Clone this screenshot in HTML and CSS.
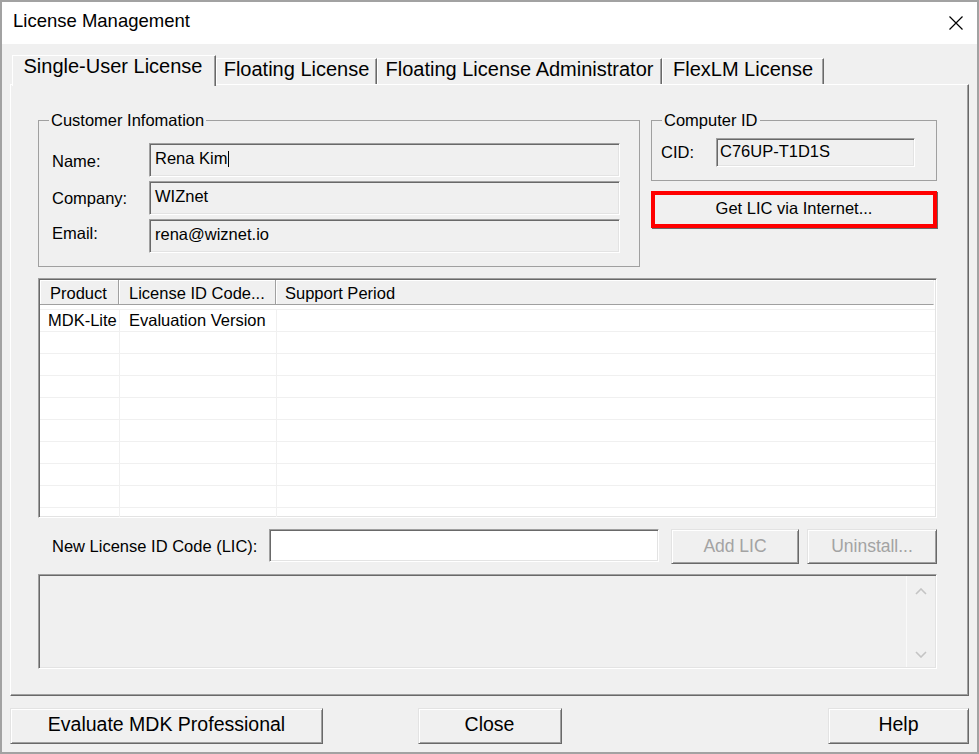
FILE: index.html
```html
<!DOCTYPE html>
<html lang="en">
<head>
<meta charset="utf-8">
<title>License Management</title>
<link rel="stylesheet" href="styles.css">
</head>
<body>
<div class="window">
  <div class="titlebar">
    <span class="title">License Management</span>
    <svg class="close-x" width="14" height="14" viewBox="0 0 14 14" aria-hidden="true">
      <path d="M0.5 0.5 L13.5 13.5 M13.5 0.5 L0.5 13.5" stroke="#000" stroke-width="1.2" fill="none"/>
    </svg>
  </div>
  <div class="client">
    <div class="tabs">
      <div class="tab active tab-single">Single-User License</div>
      <div class="tab tab-floating">Floating License</div>
      <div class="tab tab-admin">Floating License Administrator</div>
      <div class="tab tab-flex">FlexLM License</div>
    </div>
    <div class="panel">
      <div class="top-row">
        <fieldset class="group customer">
          <legend class="legend-customer">Customer Infomation</legend>
          <div class="form-grid">
            <span class="lbl lbl-name">Name:</span>
            <div class="field">Rena Kim<span class="caret"></span></div>
            <span class="lbl">Company:</span>
            <div class="field">WIZnet</div>
            <span class="lbl lbl-email">Email:</span>
            <div class="field">rena@wiznet.io</div>
          </div>
        </fieldset>
        <div class="right-col">
          <fieldset class="group computer">
            <legend class="legend-computer">Computer ID</legend>
            <div class="cid-row">
              <span class="lbl cid-lbl">CID:</span>
              <div class="field cid-field">C76UP-T1D1S</div>
            </div>
          </fieldset>
          <div class="btn getlic">Get LIC via Internet...</div>
        </div>
      </div>

      <div class="listview">
        <div class="lv-header">
          <div class="hcell h1">Product</div>
          <div class="hcell h2">License ID Code...</div>
          <div class="hcell h3">Support Period</div>
        </div>
        <div class="lv-body">
          <div class="row"><div class="c c1">MDK-Lite</div><div class="c c2">Evaluation Version</div><div class="c c3"></div></div>
          <div class="row"><div class="c c1"></div><div class="c c2"></div><div class="c c3"></div></div>
          <div class="row"><div class="c c1"></div><div class="c c2"></div><div class="c c3"></div></div>
          <div class="row"><div class="c c1"></div><div class="c c2"></div><div class="c c3"></div></div>
          <div class="row"><div class="c c1"></div><div class="c c2"></div><div class="c c3"></div></div>
          <div class="row"><div class="c c1"></div><div class="c c2"></div><div class="c c3"></div></div>
          <div class="row"><div class="c c1"></div><div class="c c2"></div><div class="c c3"></div></div>
          <div class="row"><div class="c c1"></div><div class="c c2"></div><div class="c c3"></div></div>
          <div class="row"><div class="c c1"></div><div class="c c2"></div><div class="c c3"></div></div>
          <div class="row"><div class="c c1"></div><div class="c c2"></div><div class="c c3"></div></div>
        </div>
      </div>

      <div class="lic-row">
        <span class="lbl lic-lbl">New License ID Code (LIC):</span>
        <div class="lic-input"></div>
        <div class="btn disabled add-btn">Add LIC</div>
        <div class="btn disabled uninstall-btn">Uninstall...</div>
      </div>

      <div class="textarea">
        <div class="ta-content"></div>
        <div class="scrollbar">
          <svg width="12" height="7" viewBox="0 0 12 7" aria-hidden="true"><polyline points="1,6 6,1 11,6" fill="none" stroke="#c4c4c4" stroke-width="1.6"/></svg>
          <svg width="12" height="7" viewBox="0 0 12 7" aria-hidden="true"><polyline points="1,1 6,6 11,1" fill="none" stroke="#c4c4c4" stroke-width="1.6"/></svg>
        </div>
      </div>
    </div>

    <div class="footer">
      <div class="btn big eval-btn">Evaluate MDK Professional</div>
      <div class="btn big close-btn">Close</div>
      <div class="btn big help-btn">Help</div>
    </div>
  </div>
</div>
</body>
</html>
```

FILE: styles.css
```css
html, body {
  margin: 0;
  padding: 0;
  background: #f0f0f0;
}

.window {
  width: 979px;
  height: 754px;
  box-sizing: border-box;
  border: 2px solid #a2a2a2;
  display: flex;
  flex-direction: column;
  font-family: "Liberation Sans", Arial, sans-serif;
  color: #000;
  overflow: hidden;
}

.titlebar {
  height: 42px;
  flex: none;
  background: #fff;
  display: flex;
  justify-content: space-between;
  align-items: flex-start;
  padding: 8px 14px 0 11px;
  box-sizing: border-box;
}

.title {
  font-size: 18.5px;
  line-height: 22px;
}

.close-x {
  margin-top: 6px;
}

.client {
  flex: 1;
  background: #f0f0f0;
  padding: 11px 8px 0 8px;
  display: flex;
  flex-direction: column;
}

/* Tabs */
.tabs {
  height: 29px;
  display: flex;
  align-items: flex-start;
  margin-left: 2px;
  position: relative;
  z-index: 1;
}

.tab {
  box-sizing: border-box;
  height: 26px;
  margin-top: 3px;
  background: #f0f0f0;
  border-top: 1px solid #fff;
  border-left: 1px solid #fff;
  border-right: 1px solid #696969;
  box-shadow: inset -1px 0 0 #a0a0a0;
  font-size: 20px;
  line-height: 21px;
  text-align: center;
  white-space: nowrap;
}

.tab.active {
  height: 31px;
  margin-top: 0;
  line-height: 21px;
  padding-right: 2px;
}

.tab-single { width: 204px; }
.tab-floating { width: 161px; }
.tab-admin { width: 285px; }
.tab-flex { width: 162px; }

/* Panel */
.panel {
  box-sizing: border-box;
  height: 612px;
  flex: none;
  border-top: 1px solid #fff;
  border-left: 1px solid #fff;
  border-right: 1px solid #696969;
  border-bottom: 1px solid #696969;
  box-shadow: inset -1px -1px 0 #a0a0a0;
  padding: 26px 31px 0 27px;
  display: flex;
  flex-direction: column;
}

.top-row {
  display: flex;
  gap: 11px;
  height: 156px;
}

.group {
  margin: 0;
  border: 1px solid #a0a0a0;
  min-width: 0;
  box-sizing: border-box;
}

.group legend {
  font-size: 16.5px;
  line-height: 18px;
  padding: 0 2px;
}

.customer {
  width: 602px;
  flex: none;
  padding: 14px 19px 13px 13px;
}

.legend-customer {
  margin-left: -3px;
}

.form-grid {
  display: grid;
  grid-template-columns: 97px 1fr;
  grid-auto-rows: 34px;
  row-gap: 4px;
}

.lbl {
  font-size: 16.5px;
  align-self: center;
  white-space: nowrap;
}

.lbl-name {
  padding-top: 2px;
}

.lbl-email {
  padding-bottom: 6px;
}

.field {
  box-sizing: border-box;
  background: #f0f0f0;
  border: 1px solid;
  border-color: #a0a0a0 #fff #fff #a0a0a0;
  box-shadow: inset 1px 1px 0 #696969, inset -1px -1px 0 #e3e3e3;
  font-size: 16.5px;
  display: flex;
  align-items: center;
  padding: 0 0 3px 5px;
  white-space: nowrap;
}

.caret {
  display: inline-block;
  width: 1px;
  height: 16px;
  background: #000;
  margin-left: 1px;
}

.right-col {
  flex: 1;
  display: flex;
  flex-direction: column;
}

.computer {
  height: 70px;
  padding: 9px 21px 13px 9px;
}

.legend-computer {
  margin-left: 1px;
}

.cid-row {
  display: flex;
  height: 29px;
}

.cid-lbl {
  width: 55px;
  flex: none;
}

.cid-field {
  flex: 1;
  padding-left: 3px;
}

/* Buttons */
.btn {
  box-sizing: border-box;
  background: #f0f0f0;
  border: 1px solid;
  border-color: #e3e3e3 #696969 #696969 #e3e3e3;
  box-shadow: inset 1px 1px 0 #fff, inset -1px -1px 0 #a0a0a0;
  display: flex;
  align-items: center;
  justify-content: center;
  white-space: nowrap;
  font-size: 16.5px;
}

.getlic {
  margin-top: 10px;
  height: 37px;
  border: 4px solid #ff0000;
  box-shadow: 1px 1px 0 #696969;
  padding-bottom: 3px;
}

.btn.disabled {
  color: #a3a3a3;
  font-size: 17.5px;
}

.btn.big {
  font-size: 19.5px;
  height: 36px;
  padding-bottom: 4px;
}

/* List view */
.listview {
  margin-top: 11px;
  height: 240px;
  flex: none;
  box-sizing: border-box;
  background: #fff;
  border: 1px solid;
  border-color: #a0a0a0 #fff #fff #a0a0a0;
  box-shadow: inset 1px 1px 0 #696969, inset -1px -1px 0 #e3e3e3;
  padding: 1px;
  overflow: hidden;
  font-size: 16.5px;
}

.lv-header {
  display: grid;
  grid-template-columns: 79px 157px 1fr;
  height: 24px;
  margin-right: 1px;
}

.hcell {
  box-sizing: border-box;
  background: #f0f0f0;
  border-right: 1px solid #a0a0a0;
  border-bottom: 1px solid #a0a0a0;
  box-shadow: inset 1px 1px 0 #fff;
  padding: 2px 0 0 10px;
  line-height: 22px;
  white-space: nowrap;
}

.hcell.h3 {
  padding-left: 9px;
  border-right-color: #f0f0f0;
}

.lv-body {
  padding-top: 5px;
}

.row {
  display: grid;
  grid-template-columns: 80px 157px 1fr;
  height: 22px;
  box-sizing: border-box;
  border-top: 1px solid #f0f0f0;
}

.c {
  border-right: 1px solid #f0f0f0;
  line-height: 21px;
  white-space: nowrap;
  padding-left: 9px;
}

.c1 {
  padding-left: 8px;
}

.c3 {
  border-right: none;
}

/* LIC row */
.lic-row {
  margin-top: 11px;
  height: 35px;
  flex: none;
  display: flex;
  align-items: flex-start;
}

.lic-lbl {
  flex: 1;
  padding-left: 14px;
  align-self: center;
}

.lic-input {
  width: 390px;
  height: 33px;
  box-sizing: border-box;
  background: #fff;
  border: 1px solid;
  border-color: #a0a0a0 #fff #fff #a0a0a0;
  box-shadow: inset 1px 1px 0 #696969, inset -1px -1px 0 #e3e3e3;
}

.add-btn {
  width: 128px;
  height: 35px;
  margin-left: 12px;
}

.uninstall-btn {
  width: 130px;
  height: 35px;
  margin-left: 8px;
}

/* Text area */
.textarea {
  margin-top: 10px;
  height: 95px;
  flex: none;
  box-sizing: border-box;
  background: #f0f0f0;
  border: 1px solid;
  border-color: #a0a0a0 #fff #fff #a0a0a0;
  box-shadow: inset 1px 1px 0 #696969, inset -1px -1px 0 #e3e3e3;
  display: flex;
  padding: 1px;
}

.ta-content {
  flex: 1;
}

.scrollbar {
  width: 28px;
  box-sizing: border-box;
  border-left: 1px solid #fafafa;
  margin-right: 1px;
  display: flex;
  flex-direction: column;
  justify-content: space-between;
  align-items: center;
  padding: 12px 0 9px 0;
}

/* Footer */
.footer {
  margin-top: 12px;
  display: grid;
  grid-template-columns: 1fr auto 1fr;
  align-items: start;
}

.eval-btn {
  width: 313px;
}

.close-btn {
  width: 144px;
}

.help-btn {
  width: 141px;
  justify-self: end;
}
```
